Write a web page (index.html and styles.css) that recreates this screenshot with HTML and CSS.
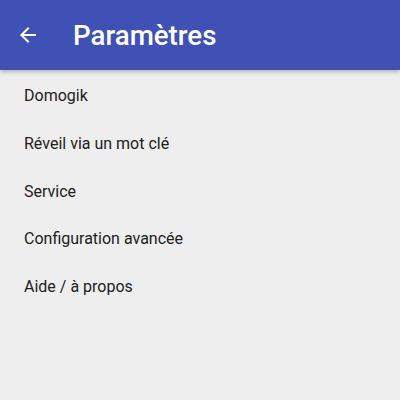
FILE: index.html
```html
<!DOCTYPE html>
<html lang="fr">
<head>
<meta charset="utf-8">
<link rel="stylesheet" href="styles.css">
</head>
<body>
<header class="toolbar">
  <svg class="back" viewBox="0 0 24 24" width="24" height="24"><path fill="#fff" d="M20 11H7.83l5.59-5.59L12 4l-8 8 8 8 1.41-1.41L7.83 13H20v-2z"/></svg>
  <h1 class="title">Paramètres</h1>
</header>
<ul class="list">
  <li>Domogik</li>
  <li>Réveil via un mot clé</li>
  <li>Service</li>
  <li>Configuration avancée</li>
  <li>Aide / à propos</li>
</ul>
</body>
</html>
```
FILE: styles.css
```css
html, body { margin: 0; padding: 0; }
body {
  width: 400px;
  height: 400px;
  background: #eeeeee;
  font-family: Roboto, "Noto Sans", sans-serif;
  overflow: hidden;
}
.toolbar {
  height: 70px;
  background: #3f51b5;
  display: flex;
  align-items: center;
  padding-left: 16px;
  box-shadow: 0 2px 4px rgba(0,0,0,0.25);
  position: relative;
}
.back { display: block; flex: none; }
.title {
  margin: 0 0 0 33px;
  color: #fff;
  font-size: 27.7px;
  font-weight: 500;
}
.list {
  list-style: none;
  margin: 0;
  padding: 2px 0 0 0;
}
.list li {
  height: 47.8px;
  line-height: 47.8px;
  padding-left: 24px;
  font-size: 16px;
  color: #212121;
}
```
